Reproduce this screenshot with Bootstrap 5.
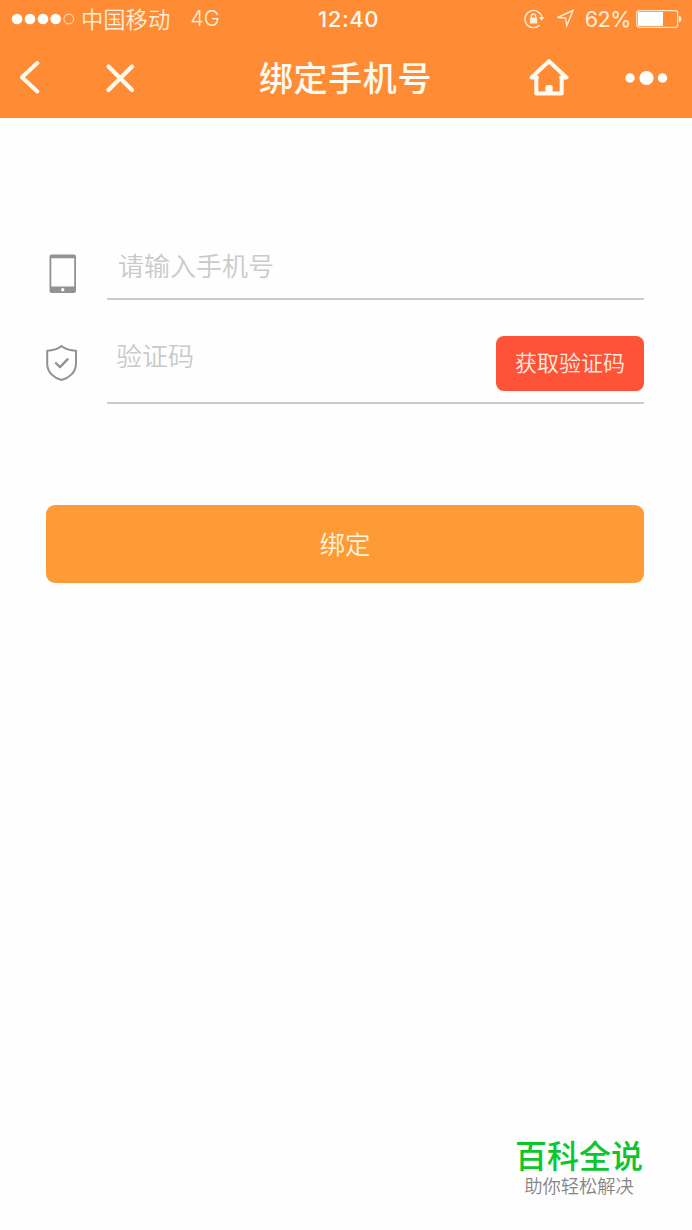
<!DOCTYPE html>
<html lang="zh-CN">
<head>
<meta charset="utf-8">
<meta name="viewport" content="width=device-width, initial-scale=1">
<title>绑定手机号</title>
<link href="https://cdn.jsdelivr.net/npm/bootstrap@5.3.0/dist/css/bootstrap.min.css" rel="stylesheet">
<style>
  body { font-family: Roboto, "Noto Sans CJK SC", sans-serif; line-height: 1; background: #fefefe; }
  svg { display: block; flex: none; }
  .app-head { height: 118px; background: #ff8c35; color: #fffaf0; }
  .status-row { height: 38px; padding: 0 10px 0 11px; }
  .status-side { width: 246px; font-size: 22.3px; color: #ffeedb; }
  .carrier { font-weight: 350; margin-left: 6px; padding-top: 2px; }
  .network { font-family: Inter, sans-serif; font-size: 21.5px; font-weight: 300; margin-left: 20px; }
  .clock { font-family: Inter, sans-serif; font-size: 22px; font-weight: 500; letter-spacing: .6px; margin-left: 4px; }
  .percent { font-family: Inter, sans-serif; font-size: 21.5px; margin: 0 5px 0 11px; padding-top: 1px; letter-spacing: -.4px; }
  .title-row { height: 80px; padding: 0 24px 0 19px; }
  .title-side { width: 150px; }
  .page-title { font-size: 34px; font-weight: 500; letter-spacing: .6px; padding: 2px 0 0 4px; }
  .bind-form { padding: 126px 48px 0 46px; }
  .field-icon { width: 61px; }
  .field-line { border-bottom: 2px solid #cbcbcb; }
  .phone-line { height: 56px; padding-top: 1px; }
  .code-line { height: 104px; padding-top: 35px; }
  .field-input { font-size: 26px; font-weight: 350; height: 44px; line-height: 44px; padding: 0 0 0 11px; border-radius: 0; background: none; }
  .code-input { padding-left: 9px; }
  .field-input::placeholder { color: #cacaca; opacity: 1; }
  .code-btn { width: 148px; height: 55px; flex: none; margin-top: 1px; padding: 1px 0 0; border: 0; border-radius: 8px; background: #ff5338; color: #ffeee6; font-size: 22px; font-weight: 350; line-height: 54px; }
  .bind-btn { height: 78px; margin-top: 101px; padding: 2px 0 0; border: 0; border-radius: 9px; background: #ff9b37; color: #fff5df; font-size: 25.5px; font-weight: 350; line-height: 76px; }
  .brand { width: 128px; margin: 0 49px 31px auto; }
  .brand-name { font-size: 32px; font-weight: 500; color: #0bc72d; line-height: 36px; }
  .brand-note { font-size: 18.3px; font-weight: 350; color: #858585; line-height: 24px; }
</style>
</head>
<body class="d-flex flex-column min-vh-100">
<header class="app-head">
  <div class="status-row d-flex align-items-center justify-content-between">
    <div class="status-side d-flex align-items-center text-nowrap">
      <svg width="64" height="12" viewBox="0 0 64 12" fill="#fff">
        <circle cx="6" cy="6" r="5.3"/><circle cx="19" cy="6" r="5.3"/><circle cx="32" cy="6" r="5.3"/><circle cx="44.7" cy="6" r="5.3"/>
        <circle cx="57.8" cy="6" r="4.9" fill="none" stroke="#ffe8cf"/>
      </svg>
      <span class="carrier">中国移动</span>
      <span class="network">4G</span>
    </div>
    <div class="clock">12:40</div>
    <div class="status-side d-flex align-items-center justify-content-end text-nowrap">
      <svg width="24" height="22" viewBox="0 0 24 22" fill="none" stroke="#ffecd8" stroke-width="1.4">
        <path d="M20 9.6A8.6 8.6 0 1 0 17.7 17"/>
        <path d="M16.8 9h5.6l-2.8 3.8z" fill="#ffecd8" stroke="none"/>
        <path d="M7.8 9.500h7.400v6H7.800z" fill="#ffecd8" stroke="none"/><path d="M9.300 10V8.200a2.200 2.200 0 0 1 4.400 0V10"/>
      </svg>
      <svg class="ms-2" width="20" height="20" viewBox="0 0 20 20" fill="none" stroke="#ffecd8" stroke-width="1.4" stroke-linejoin="miter">
        <path d="M19 1.500L3.500 8.500l8 .5 1.300 7.500z"/>
      </svg>
      <span class="percent">62%</span>
      <svg width="46" height="20" viewBox="0 0 46 20">
        <rect x=".7" y="1.7" width="41" height="16.6" rx="2.5" fill="none" stroke="#ffe4c8" stroke-width="1.2"/>
        <path d="M2 3h25v14H2z" fill="#fff"/><path d="M43 7q2.300 0 2.300 3T43 13z" fill="#fff5e8"/>
      </svg>
    </div>
  </div>
  <div class="title-row d-flex align-items-center justify-content-between">
    <div class="title-side d-flex align-items-center">
      <svg width="22" height="34" viewBox="0 0 22 34" fill="none" stroke="#fffaf0" stroke-width="4" stroke-linecap="round" stroke-linejoin="round"><path d="M18.300 2L3 16.300 18.300 30.500"/></svg>
      <svg style="margin-left:63px" width="32" height="32" viewBox="0 0 32 32" fill="none" stroke="#fffaf0" stroke-width="4.200" stroke-linecap="round"><path d="M4.500 4.500l23.500 23.500M28 4.500L4.500 28"/></svg>
    </div>
    <h1 class="page-title m-0 text-nowrap">绑定手机号</h1>
    <div class="title-side d-flex align-items-center justify-content-end">
      <svg width="40" height="38" viewBox="0 0 40 38" fill="none" stroke="#fffaf0" stroke-width="4" stroke-linecap="round" stroke-linejoin="round">
        <path d="M8 18.500H2.500L20 2.200 37.500 18.500H32"/><path d="M7.300 19V34.500H32.700V19"/><path d="M16.300 34V28q0-2 2-2h3.400q2 0 2 2V34z" fill="#fffaf0" stroke="none"/>
      </svg>
      <svg style="margin-left:56px" width="43" height="16" viewBox="0 0 43 16" fill="#fff"><circle cx="5" cy="8" r="4.700"/><circle cx="21.500" cy="8" r="7.100"/><circle cx="37.500" cy="8" r="4.700"/></svg>
    </div>
  </div>
</header>
<main class="bind-form">
  <div class="d-flex">
    <div class="field-icon">
      <svg style="margin:10px 0 0 3px" width="28" height="40" viewBox="0 0 28 40">
        <path fill="#929292" fill-rule="evenodd" d="M2.500.5h22.500q2 0 2 2v34.500q0 2-2 2h-22.500q-2 0-2-2v-34.500q0-2 2-2zM2.300 4.300v28.200h22.900V4.300z"/><circle cx="13.700" cy="35.800" r="1.700" fill="#fff"/>
      </svg>
    </div>
    <div class="field-line phone-line flex-grow-1">
      <input class="field-input form-control border-0 shadow-none" type="tel" placeholder="请输入手机号" aria-label="手机号">
    </div>
  </div>
  <div class="d-flex">
    <div class="field-icon">
      <svg style="margin-top:44px" width="32" height="38" viewBox="0 0 32 38" fill="none" stroke="#929292" stroke-width="2" stroke-linejoin="round">
        <path d="M15.500 2C12 5 6.500 6.500 1.200 6.700V19.500C1.200 28.500 8 34 15.500 36 23 34 30 28.500 30 19.500V6.700C24.500 6.500 19 5 15.500 2z"/>
        <path d="M9.300 18.500l4.700 4.600 8.200-8.500" stroke-width="2.300"/>
      </svg>
    </div>
    <div class="field-line code-line flex-grow-1 d-flex align-items-start">
      <input class="field-input code-input form-control border-0 shadow-none" type="text" placeholder="验证码" aria-label="验证码">
      <button class="btn code-btn" type="button">获取验证码</button>
    </div>
  </div>
  <button class="btn bind-btn w-100" type="button">绑定</button>
</main>
<footer class="mt-auto">
  <div class="brand text-center text-nowrap">
    <div class="brand-name">百科全说</div>
    <div class="brand-note">助你轻松解决</div>
  </div>
</footer>
<script src="https://cdn.jsdelivr.net/npm/bootstrap@5.3.0/dist/js/bootstrap.bundle.min.js"></script>
</body>
</html>
